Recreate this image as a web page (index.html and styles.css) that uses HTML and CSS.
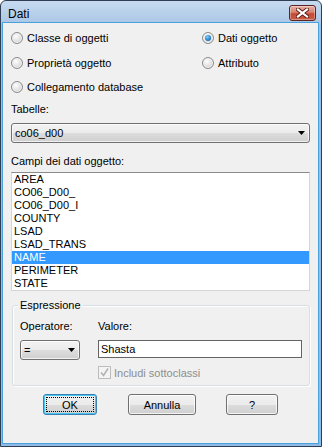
FILE: index.html
```html
<!DOCTYPE html>
<html>
<head>
<meta charset="utf-8">
<link rel="stylesheet" href="styles.css">
</head>
<body>
<div class="window">
  <div class="titlebar">
    <span class="title">Dati</span>
    <span class="close">
      <svg width="13" height="10" viewBox="0 0 13 10">
        <path d="M2 1.5 L11 8.5 M11 1.5 L2 8.5" stroke="#5a1a14" stroke-width="4" stroke-linecap="square" fill="none"/>
        <path d="M2 1.5 L11 8.5 M11 1.5 L2 8.5" stroke="#ffffff" stroke-width="2.2" stroke-linecap="square" fill="none"/>
      </svg>
    </span>
  </div>
  <div class="client">
    <div class="radios">
      <div class="radio"><span class="rb"></span><span>Classe di oggetti</span></div>
      <div class="radio"><span class="rb on"></span><span>Dati oggetto</span></div>
      <div class="radio"><span class="rb"></span><span>Proprietà oggetto</span></div>
      <div class="radio"><span class="rb"></span><span>Attributo</span></div>
      <div class="radio"><span class="rb"></span><span>Collegamento database</span></div>
    </div>
    <div class="label l-tab">Tabelle:</div>
    <div class="combo wide"><span class="ctext">co06_d00</span><svg class="arrow" width="7" height="4" viewBox="0 0 7 4"><polygon points="0,0 7,0 3.5,4" fill="#000"/></svg></div>
    <div class="label l-campi">Campi dei dati oggetto:</div>
    <div class="list">
      <div class="item">AREA</div>
      <div class="item">CO06_D00_</div>
      <div class="item">CO06_D00_I</div>
      <div class="item">COUNTY</div>
      <div class="item">LSAD</div>
      <div class="item">LSAD_TRANS</div>
      <div class="item sel">NAME</div>
      <div class="item">PERIMETER</div>
      <div class="item">STATE</div>
    </div>
    <div class="group">
      <div class="group-title">Espressione</div>
      <div class="expr">
        <div class="label">Operatore:</div>
        <div class="label">Valore:</div>
        <div class="combo op"><span class="ctext">=</span><svg class="arrow" width="7" height="4" viewBox="0 0 7 4"><polygon points="0,0 7,0 3.5,4" fill="#000"/></svg></div>
        <div class="textbox">Shasta</div>
        <div></div>
        <div class="check">
          <span class="cb"><svg width="11" height="11" viewBox="0 0 11 11"><path d="M2 5.5 L4.5 8.5 L9 1.5" stroke="#b3b3b3" stroke-width="1.6" fill="none"/></svg></span>
          <span class="disabled">Includi sottoclassi</span>
        </div>
      </div>
    </div>
    <div class="buttons">
      <div class="btn default ok"><span class="focus">OK</span></div>
      <div class="btn cancel">Annulla</div>
      <div class="btn help">?</div>
    </div>
  </div>
</div>
</body>
</html>
```

FILE: styles.css
```css
html, body {
  margin: 0;
  padding: 0;
  background: #ffffff;
}
body {
  font-family: "Liberation Sans", Arial, sans-serif;
  font-size: 11px;
  color: #000;
}
.window {
  width: 322px;
  height: 447px;
  box-sizing: border-box;
  border: 1px solid #2f3e52;
  border-radius: 6px 6px 0 0;
  background: linear-gradient(#c7dbf0 0px, #abc7e6 22px, #9ec0e6 23px, #8fbbe6 100%);
  display: flex;
  flex-direction: column;
  padding: 0 3px 3px 2px;
}
.titlebar {
  height: 22px;
  flex: none;
  display: flex;
  align-items: flex-start;
  justify-content: space-between;
  padding: 0 2px 0 5px;
}
.title {
  font-size: 12px;
  line-height: 12px;
  margin-top: 7px;
  color: #000;
}
.close {
  width: 25px;
  height: 14px;
  margin-top: 4px;
  border: 1px solid #5b2323;
  border-radius: 3px;
  background: linear-gradient(#e8b0a6 0%, #d7826f 45%, #c54a38 55%, #c75a40 100%);
  box-shadow: inset 0 0 0 1px rgba(255,255,255,0.35);
  display: flex;
  align-items: center;
  justify-content: center;
}
.client {
  flex: 1;
  background: #f0f0f0;
  padding: 3px 8px 0 8px;
  box-shadow: 0 0 0 1px #4aa2dc;
  display: flex;
  flex-direction: column;
}
.radios {
  display: grid;
  grid-template-columns: 191px auto;
  grid-template-rows: 24px 25px 24px;
  align-items: center;
}
.radio {
  display: flex;
  align-items: center;
  gap: 4px;
  line-height: 14px;
}
.rb {
  width: 10px;
  height: 10px;
  border: 1px solid #8a8a8a;
  border-radius: 50%;
  background: radial-gradient(circle at 40% 35%, #ffffff 0%, #e4e4e4 45%, #c9c9c9 100%);
  box-shadow: inset 0 0 0 1px #f4f4f4;
  display: flex;
  align-items: center;
  justify-content: center;
}
.rb.on::after {
  content: "";
  width: 6px;
  height: 6px;
  border-radius: 50%;
  background: radial-gradient(circle at 40% 35%, #86d3fb 0%, #2c8ad0 50%, #0f4d8c 100%);
}
.label {
  line-height: 14px;
}
.l-tab { margin-top: 3px; }
.l-campi { margin-top: 11px; }
.combo {
  box-sizing: border-box;
  height: 20px;
  border: 1px solid #707070;
  border-radius: 3px;
  background: linear-gradient(#f3f3f3 0%, #ebebeb 50%, #dddddd 50%, #cfcfcf 100%);
  box-shadow: inset 0 0 0 1px rgba(255,255,255,0.7);
  display: flex;
  align-items: center;
  justify-content: space-between;
  padding: 0 4px 0 3px;
}
.combo.wide { margin-top: 7px; }
.combo .ctext { line-height: 14px; }
.arrow { display: block; }
.list {
  margin-top: 4px;
  height: 119px;
  box-sizing: border-box;
  background: #fff;
  border: 1px solid #d5d5d5;
  border-top-color: #8a8a8a;
  overflow: hidden;
}
.item {
  height: 13px;
  line-height: 13px;
  padding-left: 2px;
}
.item.sel {
  background: #3399ff;
  color: #fff;
}
.group {
  margin: 14px 0 0 1px;
  border: 1px solid #d5dfe5;
  border-radius: 3px;
  box-shadow: inset 1px 1px 0 #ffffff, 1px 1px 0 #ffffff;
  padding: 0 7px 6px 7px;
  display: flex;
  flex-direction: column;
}
.group-title {
  width: max-content;
  margin: -8px 0 0 -2px;
  padding: 0 2px;
  background: #f0f0f0;
  line-height: 14px;
}
.expr {
  margin-top: 7px;
  display: grid;
  grid-template-columns: 78px 1fr;
  grid-template-rows: 14px 20px 14px;
  row-gap: 6px;
}
.expr .label:nth-child(1), .expr .label:nth-child(2) { line-height: 14px; }
.combo.op {
  width: 60px;
  margin-top: 1px;
}
.textbox {
  margin-top: 1px;
  box-sizing: border-box;
  height: 18px;
  border: 1px solid #646464;
  background: #fff;
  padding-left: 2px;
  line-height: 16px;
}
.check {
  display: flex;
  align-items: center;
  gap: 3px;
  margin-top: 1px;
}
.cb {
  width: 11px;
  height: 11px;
  border: 1px solid #bdbdbd;
  background: #f4f4f4;
  display: flex;
}
.disabled {
  color: #8d8d8d;
  line-height: 14px;
}
.buttons {
  margin-top: 8px;
  padding-left: 32px;
  display: flex;
}
.btn {
  box-sizing: border-box;
  height: 21px;
  border: 1px solid #707070;
  border-radius: 3px;
  background: linear-gradient(#f2f2f2 0%, #ebebeb 50%, #dddddd 50%, #cfcfcf 100%);
  box-shadow: inset 0 0 0 1px rgba(255,255,255,0.75);
  display: flex;
  align-items: center;
  justify-content: center;
  line-height: 14px;
}
.btn.default {
  border-color: #3c7fb1;
  box-shadow: inset 0 0 0 1px #46c6f4;
  padding: 2px;
}
.focus {
  flex: 1;
  align-self: stretch;
  border: 1px dotted #000;
  display: flex;
  align-items: center;
  justify-content: center;
}
.ok { width: 54px; }
.cancel { width: 68px; margin-left: 31px; }
.help { width: 52px; margin-left: 30px; }
```
